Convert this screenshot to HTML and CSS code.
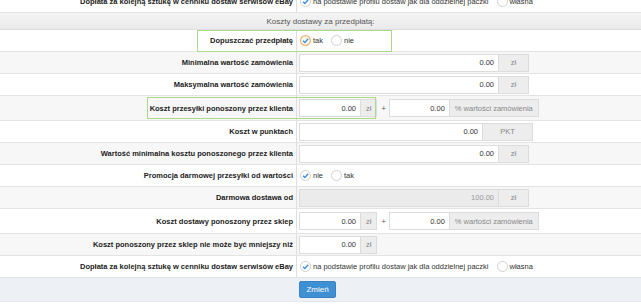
FILE: index.html
```html
<!DOCTYPE html>
<html>
<head>
    <link rel="stylesheet" href="styles.css">
</head>
<body>

    <div class="form">

        <div class="row">
            <div class="label">Dopłata za kolejną sztukę w cenniku dostaw serwisów eBay</div>
            <div class="field">
                <label class="radio"><svg class="rb" viewBox="0 0 11 11"><circle cx="5.5" cy="5.5" r="5" fill="#fff" stroke="#cfcfcf"/><path d="M3 5.7 L4.8 7.4 L8.2 3.7" fill="none" stroke="#3a8ee0" stroke-width="1.4"/></svg>na podstawie profilu dostaw jak dla oddzielnej paczki</label>
                <label class="radio"><svg class="rb" viewBox="0 0 11 11"><circle cx="5.5" cy="5.5" r="5" fill="#fff" stroke="#cfcfcf"/></svg>własna</label>
            </div>
        </div>

        <div class="section-head">Koszty dostawy za przedpłatą:</div>

        <div class="row">
            <div class="label">Dopuszczać przedpłatę</div>
            <div class="field">
                <label class="radio"><svg class="rb" viewBox="0 0 11 11"><circle cx="5.5" cy="5.5" r="4.9" fill="#fff" stroke="#f2b06a" stroke-width="1.2"/><path d="M3 5.7 L4.8 7.4 L8.2 3.7" fill="none" stroke="#3a8ee0" stroke-width="1.4"/></svg>tak</label>
                <label class="radio"><svg class="rb" viewBox="0 0 11 11"><circle cx="5.5" cy="5.5" r="5" fill="#fff" stroke="#cfcfcf"/></svg>nie</label>
            </div>
            <span class="mark mark-prepay"></span>
        </div>

        <div class="row alt">
            <div class="label">Minimalna wartość zamówienia</div>
            <div class="field">
                <div class="input w200">0.00</div><div class="addon wide">zł</div>
            </div>
        </div>

        <div class="row">
            <div class="label">Maksymalna wartość zamówienia</div>
            <div class="field">
                <div class="input w200">0.00</div><div class="addon wide">zł</div>
            </div>
        </div>

        <div class="row alt double">
            <div class="label">Koszt przesyłki ponoszony przez klienta</div>
            <div class="field">
                <div class="input w62">0.00</div><div class="addon">zł</div>
                <span class="plus">+</span>
                <div class="input w61">0.00</div><div class="addon">% wartości zamówienia</div>
            </div>
            <span class="mark mark-cost"></span>
        </div>

        <div class="row">
            <div class="label">Koszt w punktach</div>
            <div class="field">
                <div class="input w184">0.00</div><div class="addon pkt">PKT</div>
            </div>
        </div>

        <div class="row alt">
            <div class="label">Wartość minimalna kosztu ponoszonego przez klienta</div>
            <div class="field">
                <div class="input w200">0.00</div><div class="addon wide">zł</div>
            </div>
        </div>

        <div class="row">
            <div class="label">Promocja darmowej przesyłki od wartości</div>
            <div class="field">
                <label class="radio"><svg class="rb" viewBox="0 0 11 11"><circle cx="5.5" cy="5.5" r="5" fill="#fff" stroke="#cfcfcf"/><path d="M3 5.7 L4.8 7.4 L8.2 3.7" fill="none" stroke="#3a8ee0" stroke-width="1.4"/></svg>nie</label>
                <label class="radio"><svg class="rb" viewBox="0 0 11 11"><circle cx="5.5" cy="5.5" r="5" fill="#fff" stroke="#cfcfcf"/></svg>tak</label>
            </div>
        </div>

        <div class="row alt">
            <div class="label">Darmowa dostawa od</div>
            <div class="field">
                <div class="input w200 disabled">100.00</div><div class="addon wide">zł</div>
            </div>
        </div>

        <div class="row double">
            <div class="label">Koszt dostawy ponoszony przez sklep</div>
            <div class="field">
                <div class="input w62">0.00</div><div class="addon">zł</div>
                <span class="plus">+</span>
                <div class="input w61">0.00</div><div class="addon">% wartości zamówienia</div>
            </div>
        </div>

        <div class="row alt">
            <div class="label">Koszt ponoszony przez sklep nie może być mniejszy niż</div>
            <div class="field">
                <div class="input w62">0.00</div><div class="addon">zł</div>
            </div>
        </div>

        <div class="row">
            <div class="label">Dopłata za kolejną sztukę w cenniku dostaw serwisów eBay</div>
            <div class="field">
                <label class="radio"><svg class="rb" viewBox="0 0 11 11"><circle cx="5.5" cy="5.5" r="5" fill="#fff" stroke="#cfcfcf"/><path d="M3 5.7 L4.8 7.4 L8.2 3.7" fill="none" stroke="#3a8ee0" stroke-width="1.4"/></svg>na podstawie profilu dostaw jak dla oddzielnej paczki</label>
                <label class="radio"><svg class="rb" viewBox="0 0 11 11"><circle cx="5.5" cy="5.5" r="5" fill="#fff" stroke="#cfcfcf"/></svg>własna</label>
            </div>
        </div>

        <div class="actions">
            <button class="btn">Zmień</button>
        </div>

    </div>

</body>
</html>
```

FILE: styles.css
```css
body {
    margin: 0;
    font-family: 'Liberation Sans', Arial, sans-serif;
    font-size: 7.5px;
    color: #333;
    background-color: #fff;
    overflow: hidden;
}
.form {
    margin-top: -9px;
}
.row {
    display: flex;
    height: 22px;
    box-sizing: border-box;
    border-bottom: 1px solid #e3e3e3;
    background-color: #fff;
    position: relative;
}
.row.alt {
    background-color: #f7f7f7;
}
.row.double {
    height: 25px;
}
.label {
    flex: none;
    width: 297px;
    box-sizing: border-box;
    border-right: 1px solid #dedede;
    padding-right: 3px;
    display: flex;
    align-items: center;
    justify-content: flex-end;
    font-weight: bold;
    color: #222;
}
.field {
    display: flex;
    align-items: center;
    padding-left: 2px;
}
.section-head {
    height: 17px;
    box-sizing: border-box;
    border-bottom: 1px solid #dcdcdc;
    background: linear-gradient(#f4f4f4, #eaeaea);
    display: flex;
    align-items: center;
    justify-content: center;
    font-size: 8px;
    color: #555;
}
.input {
    height: 18px;
    box-sizing: border-box;
    border: 1px solid #dcdcdc;
    background-color: #fff;
    display: flex;
    align-items: center;
    justify-content: flex-end;
    padding-right: 4px;
}
.input.w200 {
    width: 200px;
}
.input.w184 {
    width: 184px;
}
.input.w62 {
    width: 62px;
}
.input.w61 {
    width: 61px;
}
.input.disabled {
    background-color: #ebebeb;
    color: #9a9a9a;
}
.addon {
    height: 18px;
    box-sizing: border-box;
    border: 1px solid #dcdcdc;
    border-left: none;
    background-color: #ededed;
    color: #888;
    display: flex;
    align-items: center;
    justify-content: center;
    padding: 0 5px;
}
.addon.wide {
    width: 30px;
}
.addon.pkt {
    width: 50px;
}
.plus {
    margin: 0 3px 0 4px;
    color: #555;
}
.radio {
    display: inline-flex;
    align-items: center;
    gap: 2px;
    margin-left: 1px;
    margin-right: 7px;
}
.rb {
    width: 11px;
    height: 11px;
}
.mark {
    position: absolute;
    border: 1px solid #a9d98b;
    box-sizing: border-box;
    pointer-events: none;
}
.mark-prepay {
    left: 197px;
    width: 195px;
    top: 0;
    height: 22px;
}
.mark-cost {
    left: 147px;
    width: 229px;
    top: 1px;
    height: 22px;
}
.actions {
    height: 24px;
    box-sizing: border-box;
    border-bottom: 1px solid #e4e7eb;
    background-color: #edf1f6;
    padding-left: 299px;
    display: flex;
    align-items: center;
}
.btn {
    width: 37px;
    height: 17px;
    padding: 0;
    border: 1px solid #3a83c2;
    border-radius: 2px;
    background-color: #3f8fd3;
    color: #fff;
    font-family: 'Liberation Sans', Arial, sans-serif;
    font-size: 8px;
}
```
